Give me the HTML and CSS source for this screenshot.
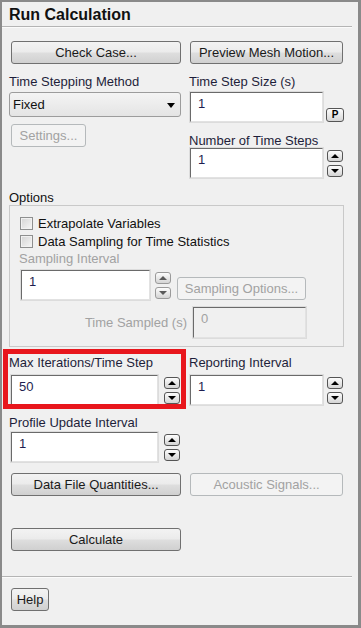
FILE: index.html
```html
<!DOCTYPE html>
<html>
<head>
    <title>Run Calculation</title>
    <link rel="stylesheet" href="styles.css">
</head>
<body>
    <div class="window">
        <div class="title">Run Calculation</div>
        <div class="separator"></div>

        <!-- 上段のボタン -->
        <div class="row row-top">
            <div class="col">
                <div class="btn btn-left">Check Case...</div>
            </div>
            <div class="col">
                <div class="btn btn-right">Preview Mesh Motion...</div>
            </div>
        </div>

        <div class="row row-time">
            <div class="col">
                <div class="label">Time Stepping Method</div>
                <div class="select">Fixed<span class="select-arrow"></span></div>
                <div class="btn btn-disabled btn-settings">Settings...</div>
            </div>
            <div class="col">
                <div class="label">Time Step Size (s)</div>
                <div class="field-row field-row-p">
                    <div class="field field-right">1</div>
                    <div class="p-btn">P</div>
                </div>
                <div class="label label-steps">Number of Time Steps</div>
                <div class="field-row field-row-steps">
                    <div class="field field-right">1</div>
                    <div class="spin">
                        <div class="spin-btn up"></div>
                        <div class="spin-btn down"></div>
                    </div>
                </div>
            </div>
        </div>

        <!-- Options グループ -->
        <div class="label label-options">Options</div>
        <div class="group">
            <div class="check-row"><span class="check"></span>Extrapolate Variables</div>
            <div class="check-row"><span class="check"></span>Data Sampling for Time Statistics</div>
            <div class="label label-disabled label-sampling">Sampling Interval</div>
            <div class="field-row field-row-sampling">
                <div class="field field-sampling">1</div>
                <div class="spin spin-disabled">
                    <div class="spin-btn up"></div>
                    <div class="spin-btn down"></div>
                </div>
                <div class="btn btn-disabled btn-sampling">Sampling Options...</div>
            </div>
            <div class="sampled-row">
                <div class="sampled-label">Time Sampled (s)</div>
                <div class="field field-off">0</div>
            </div>
        </div>

        <div class="row row-iter">
            <div class="col highlight">
                <div class="label">Max Iterations/Time Step</div>
                <div class="field-row field-row-iter">
                    <div class="field field-left">50</div>
                    <div class="spin spin-left">
                        <div class="spin-btn up"></div>
                        <div class="spin-btn down"></div>
                    </div>
                </div>
            </div>
            <div class="col">
                <div class="label">Reporting Interval</div>
                <div class="field-row field-row-iter">
                    <div class="field field-right">1</div>
                    <div class="spin">
                        <div class="spin-btn up"></div>
                        <div class="spin-btn down"></div>
                    </div>
                </div>
            </div>
        </div>

        <div class="row row-profile">
            <div class="col">
                <div class="label">Profile Update Interval</div>
                <div class="field-row field-row-profile">
                    <div class="field field-left">1</div>
                    <div class="spin spin-left">
                        <div class="spin-btn up"></div>
                        <div class="spin-btn down"></div>
                    </div>
                </div>
            </div>
        </div>

        <div class="row row-data">
            <div class="col">
                <div class="btn btn-left">Data File Quantities...</div>
            </div>
            <div class="col">
                <div class="btn btn-right btn-disabled">Acoustic Signals...</div>
            </div>
        </div>

        <div class="row row-calc">
            <div class="col">
                <div class="btn btn-left">Calculate</div>
            </div>
        </div>

        <div class="separator separator-bottom"></div>

        <div class="help-row">
            <div class="btn btn-help">Help</div>
        </div>
    </div>
</body>
</html>
```

FILE: styles.css
```css
/* ウィンドウ全体 */
body {
    margin: 0;
    font-family: "Liberation Sans", Arial, sans-serif;
    font-size: 13px;
    color: #1e1e3a;
}

.window {
    width: 361px;
    height: 628px;
    box-sizing: border-box;
    background: #f0f0f0;
    border: 2px solid #8a8a8a;
    border-right-width: 3px;
    border-bottom-width: 3px;
    overflow: hidden;
}

.title {
    font-size: 16px;
    font-weight: bold;
    line-height: 18px;
    padding: 4px 7px 0;
    color: #111;
}

.separator {
    margin: 2px 6px 0 0;
    border-top: 1px solid #b4b4b4;
    border-bottom: 1px solid #fbfbfb;
}

.separator-bottom {
    margin-top: 25px;
}

/* 2列レイアウト */
.row {
    display: grid;
    grid-template-columns: 172px 154px;
    column-gap: 8px;
    padding-left: 7px;
}

.col {
    display: flex;
    flex-direction: column;
    align-items: flex-start;
}

.row-top {
    margin-top: 13px;
}

.row-time {
    margin-top: 10px;
}

.label {
    line-height: 15px;
    white-space: nowrap;
}

.label-disabled {
    color: #a2a2a2;
}

/* ボタン */
.btn {
    box-sizing: border-box;
    height: 23px;
    line-height: 21px;
    text-align: center;
    border: 1px solid #707070;
    border-radius: 3px;
    background: linear-gradient(#f3f3f3 0%, #ebebeb 48%, #dedede 52%, #d0d0d0 100%);
    color: #1a1a1a;
    white-space: nowrap;
}

.btn-disabled {
    border-color: #b5b9bb;
    background: #f3f3f3;
    color: #a2a2a2;
}

.btn-left {
    margin-left: 2px;
    width: 170px;
}

.btn-right {
    margin-left: 1px;
    width: 153px;
}

.btn-settings {
    margin-left: 2px;
    margin-top: 7px;
    width: 75px;
}

.btn-help {
    width: 38px;
}

/* ドロップダウン */
.select {
    position: relative;
    box-sizing: border-box;
    margin-top: 3px;
    width: 172px;
    height: 25px;
    line-height: 23px;
    padding-left: 3px;
    border: 1px solid #9c9c9c;
    border-radius: 3px;
    background: linear-gradient(#f4f4f4, #e4e4e4);
    color: #111;
}

.select-arrow {
    position: absolute;
    right: 5px;
    top: 10px;
    border-left: 4px solid transparent;
    border-right: 4px solid transparent;
    border-top: 5px solid #000;
}

/* 入力欄 */
.field-row {
    display: flex;
    align-items: center;
    margin-top: 3px;
}

.field-row-p {
    align-items: flex-end;
}

.field-row-steps {
    margin-top: 0;
}

.field {
    box-sizing: border-box;
    height: 30px;
    padding: 3px 0 0 7px;
    line-height: 15px;
    background: #fff;
    border: 1px solid;
    border-color: #6a6a6a #e2e2e2 #e2e2e2 #6a6a6a;
    box-shadow: 0 0 0 1px #dcdcdc;
    color: #1e1e50;
}

.field-right {
    margin-left: 1px;
    width: 133px;
}

.field-left {
    margin-left: 2px;
    width: 147px;
}

.field-off {
    width: 113px;
    height: 31px;
    background: #f0f0f0;
    color: #a2a2a2;
}

.label-steps {
    margin-top: 11px;
}

.p-btn {
    box-sizing: border-box;
    margin-left: 3px;
    width: 18px;
    height: 14px;
    line-height: 12px;
    font-size: 10px;
    font-weight: bold;
    text-align: center;
    border: 1px solid #555;
    border-radius: 3px;
    background: linear-gradient(#fdfdfd, #d6d6d6);
    color: #000;
}

/* スピンボタン */
.spin {
    display: flex;
    flex-direction: column;
    gap: 3px;
    margin-left: 4px;
}

.spin-left {
    margin-left: 6px;
}

.spin-btn {
    box-sizing: border-box;
    width: 16px;
    height: 12px;
    border: 1px solid #555;
    border-radius: 3px;
    background: linear-gradient(#fdfdfd, #d4d4d4);
    display: flex;
    align-items: center;
    justify-content: center;
}

.spin-btn.up::after {
    content: "";
    border-left: 4px solid transparent;
    border-right: 4px solid transparent;
    border-bottom: 4px solid #000;
}

.spin-btn.down::after {
    content: "";
    border-left: 4px solid transparent;
    border-right: 4px solid transparent;
    border-top: 4px solid #000;
}

.spin-disabled .spin-btn {
    border-color: #9a9a9a;
}

.spin-disabled .spin-btn.up::after {
    border-bottom-color: #5a5a5a;
}

.spin-disabled .spin-btn.down::after {
    border-top-color: #5a5a5a;
}

/* Options グループ */
.label-options {
    margin-top: 12px;
    padding-left: 7px;
    color: #111;
}

.group {
    box-sizing: border-box;
    margin-left: 7px;
    width: 335px;
    padding: 8px 0 8px 9px;
    border: 1px solid #c9c9c9;
}

.check-row {
    display: flex;
    align-items: center;
    height: 18px;
    color: #111;
    white-space: nowrap;
}

.check {
    box-sizing: border-box;
    margin: 0 5px 0 1px;
    width: 13px;
    height: 13px;
    border: 1px solid #8e8f8f;
    background: linear-gradient(135deg, #d4d4d4, #f6f6f6);
    box-shadow: inset 0 0 0 1px #f1f1f1;
}

.label-sampling {
    margin-top: 1px;
}

.field-row-sampling {
    margin-top: 4px;
}

.field-sampling {
    margin-left: 2px;
    width: 129px;
}

.spin-disabled {
    margin-left: 5px;
}

.btn-sampling {
    align-self: flex-end;
    margin-left: 6px;
    width: 129px;
}

.sampled-row {
    display: flex;
    align-items: center;
    margin-top: 7px;
}

.sampled-label {
    width: 168px;
    text-align: right;
    color: #a2a2a2;
    margin-right: 6px;
    margin-top: -1px;
}

/* 赤枠の強調表示 */
.highlight {
    position: relative;
}

.highlight::after {
    content: "";
    position: absolute;
    left: -6px;
    top: -6px;
    right: -5px;
    bottom: -4px;
    border: 5px solid #e8161c;
}

.row-iter {
    margin-top: 8px;
}

.field-row-iter {
    margin-top: 5px;
}

.row-profile {
    margin-top: 10px;
}

.field-row-profile {
    margin-top: 2px;
}

.row-data {
    margin-top: 11px;
}

.row-calc {
    margin-top: 32px;
}

.help-row {
    margin-top: 10px;
    padding-left: 9px;
}
```
